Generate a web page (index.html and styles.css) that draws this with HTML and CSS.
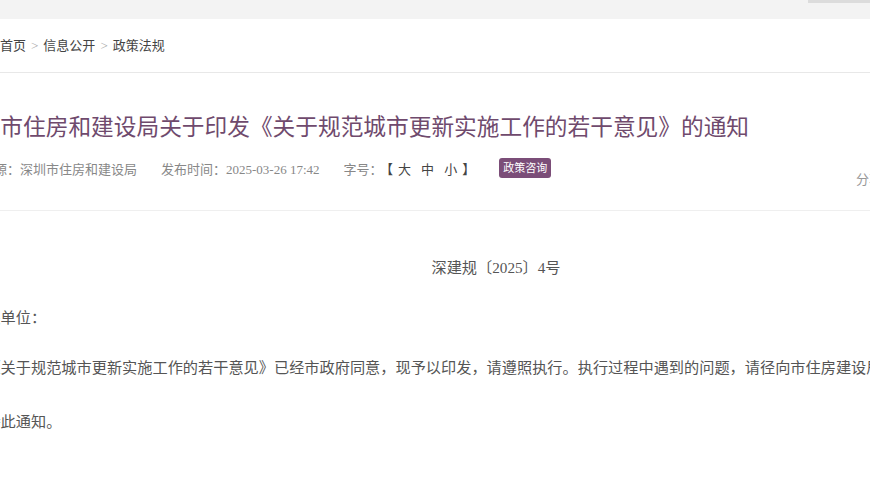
FILE: index.html
```html
<!DOCTYPE html>
<html lang="zh-CN">
<head>
<meta charset="utf-8">
<title>关于印发《关于规范城市更新实施工作的若干意见》的通知</title>
<link rel="stylesheet" href="styles.css">
</head>
<body>
<div class="topbar"><span class="top-tab"></span></div>
<div class="page">
  <div class="crumbs">
    <a class="crumb">首页</a><span class="sep">&gt;</span><a class="crumb">信息公开</a><span class="sep">&gt;</span><a class="crumb">政策法规</a>
  </div>
  <div class="article-head">
    <h1 class="title">深圳市住房和建设局关于印发《关于规范城市更新实施工作的若干意见》的通知</h1>
    <div class="meta">
      <div class="meta-left">
        <span class="meta-item">信息来源：深圳市住房和建设局</span>
        <span class="meta-item">发布时间：<span class="num">2025-03-26 17:42</span></span>
        <span class="meta-item">字号：<span class="size"><span class="br">【</span><span class="sz">大</span><span class="sz">中</span><span class="sz">小</span><span class="br">】</span></span></span>
        <span class="badge">政策咨询</span>
      </div>
      <div class="share">分享：<span class="share-icon"></span><span class="share-icon"></span><span class="share-icon"></span><span class="share-icon"></span><span class="share-icon"></span><span class="share-icon"></span></div>
    </div>
  </div>
  <div class="article-body">
    <p class="docno">深建规〔<span class="num">2025</span>〕<span class="num">4</span>号</p>
    <p class="line">各有关单位：</p>
    <p class="line indent">《关于规范城市更新实施工作的若干意见》已经市政府同意，现予以印发，请遵照执行。执行过程中遇到的问题，请径向市住房建设局反映。</p>
    <p class="line indent last">特此通知。</p>
  </div>
</div>
</body>
</html>
```
FILE: styles.css
```css
html, body {
  margin: 0;
  padding: 0;
  overflow: hidden;
  background: #ffffff;
}
body {
  font-family: "Liberation Serif", "Noto Sans CJK SC", serif;
  color: #555;
}
.topbar {
  height: 19px;
  background: #f3f3f3;
  display: flex;
  justify-content: flex-end;
  align-items: flex-start;
}
.top-tab {
  width: 62px;
  height: 3px;
  background: #dcdcdc;
}
.page {
  width: 1082px;
  margin-left: -45px;
}
.crumbs {
  height: 53px;
  line-height: 54px;
  padding-left: 45px;
  font-size: 13px;
  color: #444;
  border-bottom: 1px solid #e8e8e8;
}
.crumb { color: #444; }
.sep {
  color: #aaa;
  margin: 0 5px;
}
.article-head {
  padding-bottom: 30px;
  border-bottom: 1px solid #efefef;
}
.title {
  margin: 38px 0 0;
  font-size: 22.7px;
  line-height: 34px;
  font-weight: normal;
  color: #6f4a6d;
  white-space: nowrap;
}
.meta {
  margin-top: 11px;
  height: 24px;
  display: flex;
  justify-content: space-between;
  align-items: center;
  font-size: 13px;
  color: #888;
}
.meta-left {
  display: flex;
  align-items: center;
  gap: 24px;
}
.meta-item { white-space: nowrap; }
.num { font-family: "Liberation Serif", serif; }
.size {
  color: #444;
  margin-left: 4px;
}
.sz { margin: 0 5px; }
.br { color: #444; }
.badge {
  background: #7b4d78;
  color: #fff;
  font-size: 11px;
  line-height: 20px;
  height: 20px;
  padding: 0 4px;
  border-radius: 3px;
}
.share {
  align-self: flex-end;
  margin-bottom: -8px;
  margin-right: -2px;
  display: flex;
  align-items: center;
  gap: 6px;
  color: #999;
  font-size: 13px;
}
.share-icon {
  width: 18px;
  height: 18px;
  border-radius: 50%;
  background: #d8d8d8;
}
.article-body {
  font-size: 15.2px;
  color: #555;
}
.article-body p {
  margin: 0;
  line-height: 26px;
}
.docno {
  text-align: center;
  margin-top: 44px !important;
}
.line { margin-top: 24px !important; white-space: nowrap; }
.indent { text-indent: 2em; }
.last { margin-top: 28px !important; }
```
